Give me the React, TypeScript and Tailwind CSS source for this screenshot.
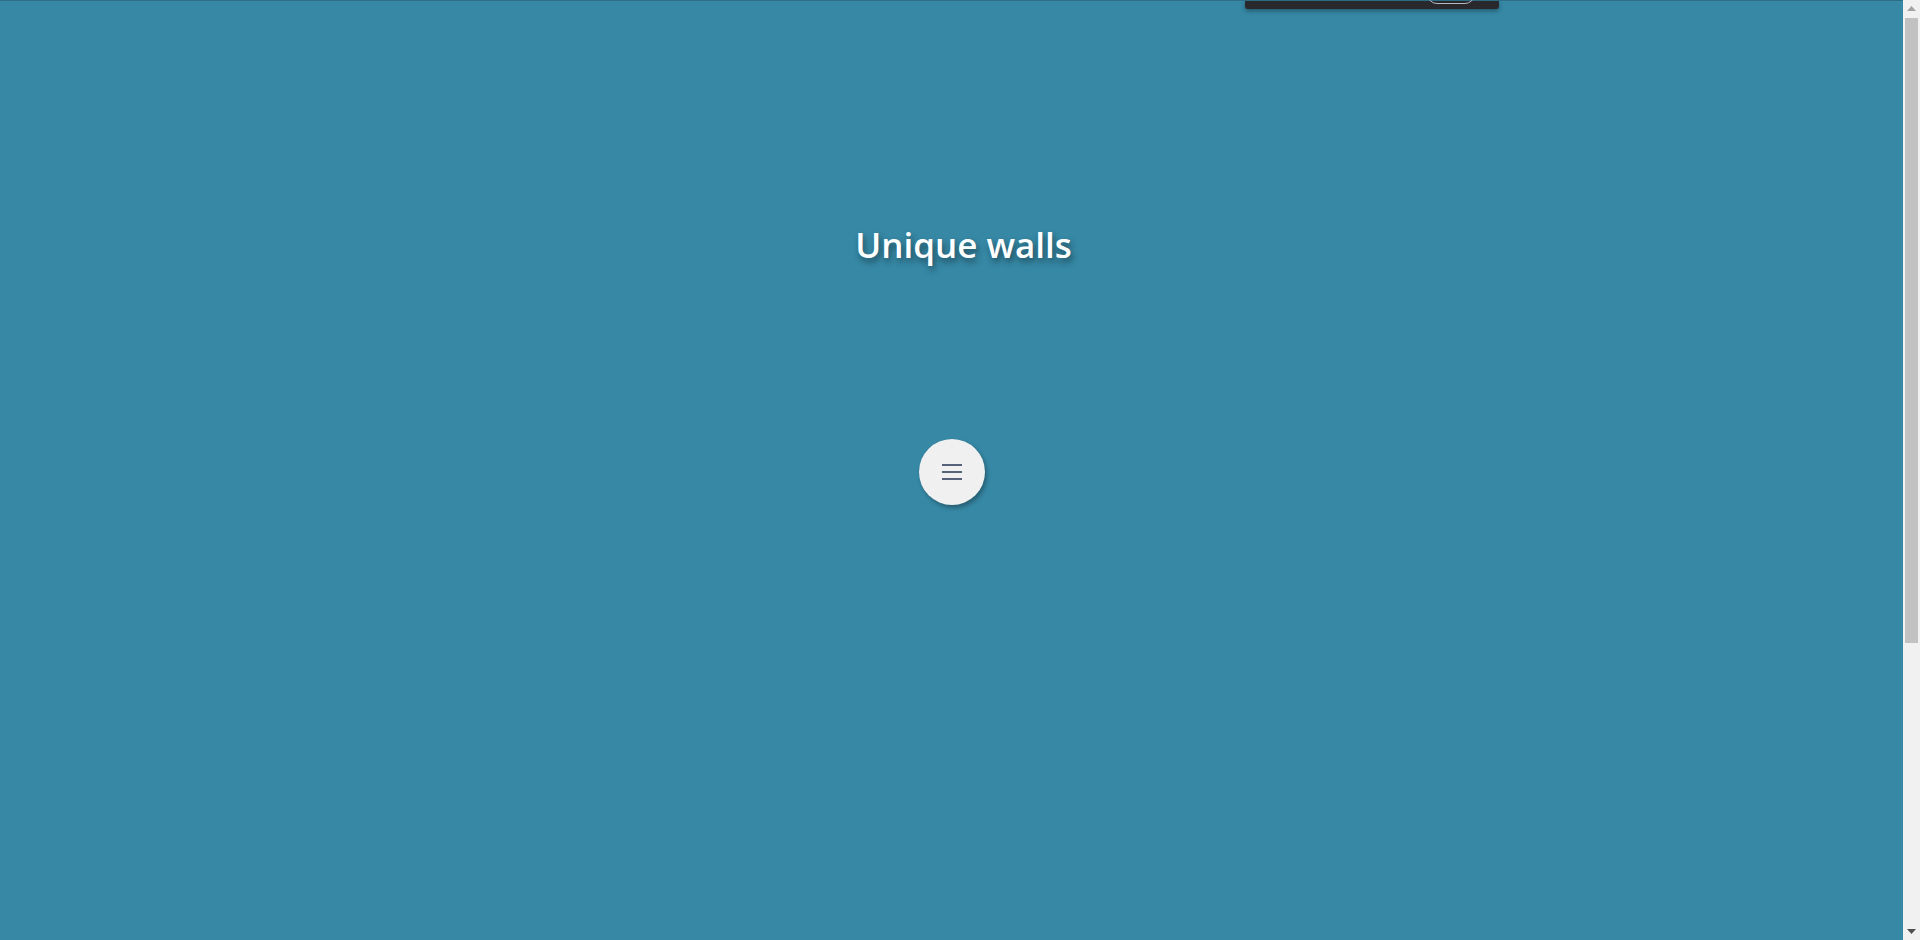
import React from "react";

export default function App() {
  return (
    <div className="flex h-[940px] w-full overflow-hidden" style={{ fontFamily: '"Open Sans", "Noto Sans", sans-serif' }}>
      <div className="relative flex-1 bg-[#3688a5] border-t border-[#2d6f88]">
        <div className="absolute left-[1245px] top-0 h-[8px] w-[254px] rounded-b-[3px] bg-[#28282d] shadow-[0_2px_4px_rgba(0,0,0,0.35)]">
          <div className="absolute left-[182px] top-[-20px] h-[23px] w-[48px] rounded-[10px] border border-[#b8b8be]" />
        </div>
        <div className="flex flex-col items-center pt-[219px]">
          <h1 className="pl-[24px] text-[35px] font-semibold leading-[50px] text-white [text-shadow:2px_4px_6px_rgba(0,0,0,0.45)]">
            Unique walls
          </h1>
          <button className="mt-[169px] flex h-[66px] w-[66px] items-center justify-center rounded-full bg-[#f0f0f0] shadow-[2px_3px_4px_rgba(0,0,0,0.3)]">
            <div className="flex flex-col gap-[5px]">
              <span className="block h-[2px] w-[20px] bg-[#56627a]" />
              <span className="block h-[2px] w-[20px] bg-[#56627a]" />
              <span className="block h-[2px] w-[20px] bg-[#56627a]" />
            </div>
          </button>
        </div>
      </div>
      <div className="flex w-[17px] flex-col items-center bg-[#f1f1f1]">
        <div className="flex h-[17px] w-full items-center justify-center">
          <svg width="9" height="5" viewBox="0 0 9 5"><path d="M4.5 0 L9 5 L0 5 Z" fill="#a3a3a3" /></svg>
        </div>
        <div className="mt-[1px] h-[625px] w-[13px] bg-[#c1c1c1]" />
        <div className="flex-1" />
        <div className="flex h-[17px] w-full items-center justify-center">
          <svg width="9" height="5" viewBox="0 0 9 5"><path d="M0 0 L9 0 L4.5 5 Z" fill="#505050" /></svg>
        </div>
      </div>
    </div>
  );
}
